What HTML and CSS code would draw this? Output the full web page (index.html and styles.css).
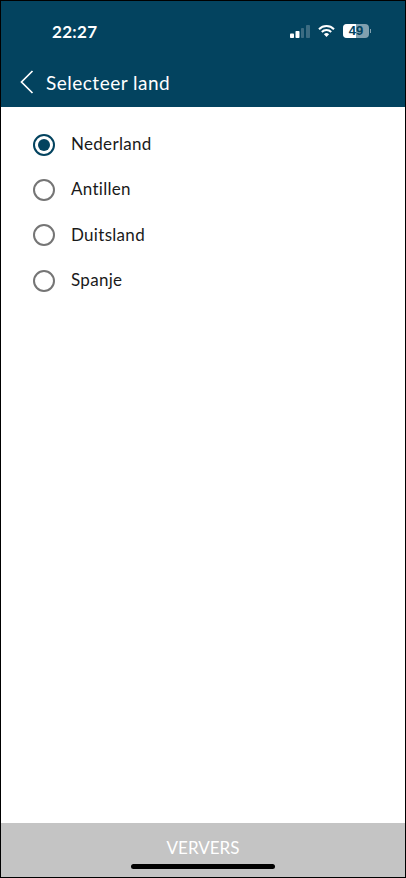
FILE: index.html
```html
<!DOCTYPE HTML>
<html lang='en'>
<head>
<meta charset='utf-8'>
<title>Selecteer land</title>
<link rel="stylesheet" href="styles.css">
</head>
<body>
<!--Main Container starts here-->
<div class='main_container'>
<!--header section starts here-->
<div class='header'>
<div class='status_bar'>
<span class='clock'>22:27</span>
<div class='status_icons'>
<svg class='signal' width='20' height='13' viewBox='0 0 20 13'>
<rect x='0' y='8.5' width='4' height='4.5' rx='0.8' fill='#fff'/>
<rect x='5.5' y='6' width='4' height='7' rx='0.8' fill='#fff'/>
<rect x='11' y='3' width='3' height='10' rx='0.8' fill='#3c6c82'/>
<rect x='16' y='0' width='4' height='13' rx='0.8' fill='#3c6c82'/>
</svg>
<svg class='wifi' width='17' height='12' viewBox='0 0 17 12'>
<path d='M1 4.2a10.6 10.6 0 0 1 15 0' fill='none' stroke='#fff' stroke-width='2'/>
<path d='M3.8 7a6.6 6.6 0 0 1 9.4 0' fill='none' stroke='#fff' stroke-width='2'/>
<path d='M8.5 12 L5.9 9.3a3.7 3.7 0 0 1 5.2 0z' fill='#fff'/>
</svg>
<div class='battery'>
<div class='battery_body'><div class='battery_level'></div><span class='battery_text'>49</span></div>
<div class='battery_tip'></div>
</div>
</div>
</div>
<div class='nav_bar'>
<svg class='back' width='14' height='24' viewBox='0 0 14 24'>
<path d='M12.5 1 L1.5 12 L12.5 23' fill='none' stroke='#fff' stroke-width='1.7'/>
</svg>
<span class='nav_title'>Selecteer land</span>
</div>
</div>
<!--header section ends here-->
<!-- Content Section starts here-->
<div class='content'>
<div class='country_row'><span class='radio radio_selected'><span class='radio_dot'></span></span><span class='country_name'>Nederland</span></div>
<div class='country_row'><span class='radio'></span><span class='country_name'>Antillen</span></div>
<div class='country_row'><span class='radio'></span><span class='country_name'>Duitsland</span></div>
<div class='country_row'><span class='radio'></span><span class='country_name'>Spanje</span></div>
</div>
<!--Content Section ends here-->
<!--footer section starts here-->
<div class='footer'>VERVERS</div>
<div class='home_indicator'></div>
<!--footer section ends here-->
</div>
<!--Main Container ends here-->
</body>
</html>
```
FILE: styles.css
```css
html, body
{
margin:0;
padding:0;
background:#ffffff;
}
.main_container
{
position:relative;
width:406px;
height:878px;
box-sizing:border-box;
border:1px solid #000000;
display:flex;
flex-direction:column;
font-family:"Lato","Liberation Sans",sans-serif;
overflow:hidden;
}
.header
{
height:106px;
background:#03435f;
color:#ffffff;
display:flex;
flex-direction:column;
}
.status_bar
{
height:60px;
display:flex;
align-items:center;
justify-content:space-between;
padding:0 34px 0 51px;
}
.clock
{
font-size:17px;
font-weight:700;
letter-spacing:0.3px;
}
.status_icons
{
display:flex;
align-items:center;
gap:8px;
}
.battery
{
display:flex;
align-items:center;
gap:1px;
}
.battery_body
{
position:relative;
width:26px;
height:14px;
border-radius:4px;
background:#80a0af;
overflow:hidden;
}
.battery_level
{
width:13px;
height:14px;
background:#ffffff;
}
.battery_text
{
position:absolute;
top:0;
left:0;
right:0;
text-align:center;
font-size:13px;
line-height:14px;
font-weight:700;
color:#03435f;
font-family:"Liberation Sans",sans-serif;
}
.battery_tip
{
width:1px;
height:4px;
background:#80a0af;
}
.nav_bar
{
flex:1;
display:flex;
align-items:center;
gap:12px;
padding:0 0 4px 19px;
}
.nav_title
{
font-size:19px;
letter-spacing:0.5px;
}
.content
{
flex:1;
padding:15px 0 0 32px;
}
.country_row
{
height:45.3px;
display:flex;
align-items:center;
gap:16px;
}
.country_name
{
font-size:17px;
color:#1a1a1a;
letter-spacing:0.3px;
padding-bottom:2px;
}
.radio
{
width:22px;
height:22px;
box-sizing:border-box;
border:2px solid #757575;
border-radius:50%;
display:flex;
align-items:center;
justify-content:center;
}
.radio_selected
{
border-color:#03435f;
}
.radio_dot
{
width:12px;
height:12px;
border-radius:50%;
background:#03435f;
}
.footer
{
height:54px;
background:#c4c4c4;
color:#ffffff;
font-size:17px;
text-align:center;
line-height:50px;
}
.home_indicator
{
position:absolute;
left:130px;
bottom:8px;
width:144px;
height:5px;
border-radius:3px;
background:#000000;
}
```
